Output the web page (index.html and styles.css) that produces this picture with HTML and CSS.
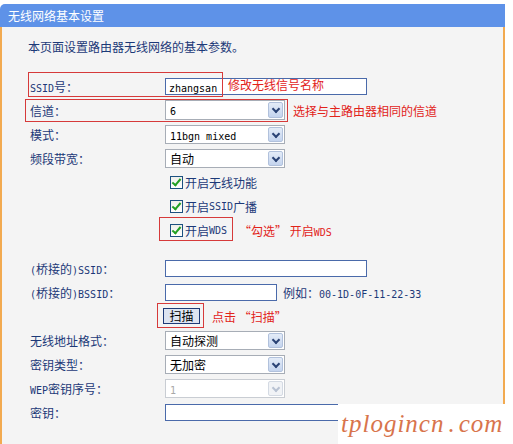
FILE: index.html
```html
<!DOCTYPE HTML>
<html lang="zh-CN">
  <head>
    <title>无线网络基本设置</title>
    <meta charset="utf-8">
    <link rel="stylesheet" href="styles.css">
  </head>
  <body>
  <div class="page">
    <div class="panel">
      <div class="panel-title">无线网络基本设置</div>
      <div class="panel-body">
        <p class="intro">本页面设置路由器无线网络的基本参数。</p>

        <div class="form">
          <div class="row">
            <div class="lbl"><span class="en">SSID</span>号：</div>
            <div class="txt wide"><span class="en">zhangsan</span></div>
          </div>
          <div class="row">
            <div class="lbl">信道：</div>
            <div class="sel tall"><span class="en">6</span><i class="arrow"></i></div>
            <span class="note">选择与主路由器相同的信道</span>
          </div>
          <div class="row">
            <div class="lbl">模式：</div>
            <div class="sel"><span class="en">11bgn mixed</span><i class="arrow"></i></div>
          </div>
          <div class="row">
            <div class="lbl">频段带宽：</div>
            <div class="sel">自动<i class="arrow"></i></div>
          </div>
          <div class="row">
            <div class="lbl"></div>
            <div class="chk"><i class="box"></i>开启无线功能</div>
          </div>
          <div class="row">
            <div class="lbl"></div>
            <div class="chk"><i class="box"></i>开启<span class="en">SSID</span>广播</div>
          </div>
          <div class="row">
            <div class="lbl"></div>
            <div class="chk"><i class="box"></i>开启<span class="en">WDS</span></div>
            <span class="note wds-note">“勾选” 开启<span class="en">WDS</span></span>
          </div>

          <div class="row gap">
            <div class="lbl"><span class="en">(</span>桥接的<span class="en">)SSID</span>：</div>
            <div class="txt wide"></div>
          </div>
          <div class="row">
            <div class="lbl"><span class="en">(</span>桥接的<span class="en">)BSSID</span>：</div>
            <div class="txt short"></div>
            <span class="hint">例如：<span class="en">00-1D-0F-11-22-33</span></span>
          </div>
          <div class="row">
            <div class="lbl"></div>
            <div class="btn">扫描</div>
            <span class="note scan-note">点击 “扫描”</span>
          </div>
          <div class="row">
            <div class="lbl">无线地址格式：</div>
            <div class="sel">自动探测<i class="arrow"></i></div>
          </div>
          <div class="row">
            <div class="lbl">密钥类型：</div>
            <div class="sel">无加密<i class="arrow"></i></div>
          </div>
          <div class="row">
            <div class="lbl"><span class="en">WEP</span>密钥序号：</div>
            <div class="sel disabled"><span class="en">1</span><i class="arrow"></i></div>
          </div>
          <div class="row">
            <div class="lbl">密钥：</div>
            <div class="txt wide"></div>
          </div>
        </div>
      </div>
    </div>

    <!-- red annotations drawn over the form -->
    <div class="mark mark-ssid"></div>
    <span class="note ssid-note">修改无线信号名称</span>
    <div class="mark mark-channel"></div>
    <div class="mark mark-wds"></div>
    <div class="mark mark-scan"></div>

    <div class="watermark">tplogincn<span class="dot">.</span>com</div>
  </div>
  </body>
</html>
```

FILE: styles.css
```css
  html, body {
    margin: 0;
    padding: 0;
    background: #ffffff;
  }
  body {
    font-family: "Noto Sans CJK SC", "Liberation Sans", sans-serif;
    font-size: 12px;
    color: #1c3978;
  }

  .page {
    position: relative;
    width: 513px;
    height: 444px;
    padding-top: 4px;
    box-sizing: border-box;
    overflow: hidden;
  }

  .en {
    font-family: "DejaVu Sans Mono", monospace;
    font-size: 10px;
  }

  .panel {
    width: 505px;
  }
  .panel-title {
    height: 23px;
    line-height: 23px;
    padding-left: 8px;
    background: #5e92e8;
    color: #ffffff;
    border-top-left-radius: 5px;
  }
  .panel-body {
    height: 417px;
    background: #f4f4f4;
    border-left: 2px solid #f2aa50;
    border-right: 2px solid #f2aa50;
    padding-top: 8px;
    box-sizing: border-box;
  }

  .intro {
    margin: 0 0 15px 26px;
    line-height: 24px;
  }

  .form {
    padding-left: 28px;
  }
  .row {
    display: flex;
    align-items: center;
    height: 24px;
  }
  .row.gap {
    margin-top: 14px;
  }
  .lbl {
    width: 135px;
    flex: none;
    white-space: nowrap;
  }

  .txt {
    height: 17px;
    box-sizing: border-box;
    border: 1px solid #4a6aaa;
    background: #ffffff;
    color: #000000;
    padding-left: 3px;
    line-height: 15px;
  }
  .txt.wide { width: 202px; }
  .txt.short { width: 112px; }

  .sel {
    position: relative;
    width: 120px;
    height: 19px;
    box-sizing: border-box;
    border: 1px solid #a7adb6;
    background: #ffffff;
    color: #000000;
    padding-left: 4px;
    line-height: 17px;
  }
  .sel.tall { height: 20px; line-height: 18px; }
  .sel .arrow {
    position: absolute;
    top: 1px;
    right: 1px;
    bottom: 1px;
    width: 15px;
    box-sizing: border-box;
    border: 1px solid #b1c1dc;
    border-radius: 2px;
    background: linear-gradient(#e4ecf8, #c4d4ee);
  }
  .sel .arrow::after {
    content: "";
    position: absolute;
    left: 4px;
    top: 3px;
    width: 4px;
    height: 4px;
    border-right: 2px solid #2b4375;
    border-bottom: 2px solid #2b4375;
    transform: rotate(45deg);
  }
  .sel.disabled {
    color: #a8a8a8;
    border-color: #c9cdd3;
  }
  .sel.disabled .arrow {
    background: #f1f3f6;
    border-color: #d4dae3;
  }
  .sel.disabled .arrow::after {
    border-color: #b8c2d2;
  }

  .chk {
    display: flex;
    align-items: center;
    margin-left: 5px;
    white-space: nowrap;
  }
  .chk .box {
    position: relative;
    width: 13px;
    height: 13px;
    box-sizing: border-box;
    border: 1px solid #1c5180;
    background: linear-gradient(#f0f0ea, #ffffff);
    margin-right: 2px;
  }
  .chk .box::after {
    content: "";
    position: absolute;
    left: 3px;
    top: 0px;
    width: 3px;
    height: 7px;
    border-right: 2px solid #22a022;
    border-bottom: 2px solid #22a022;
    transform: rotate(40deg);
  }

  .btn {
    margin-left: -2px;
    width: 37px;
    height: 16px;
    box-sizing: border-box;
    border: 1px solid #1d3a78;
    background: #dde4f1;
    color: #000000;
    text-align: center;
    line-height: 14px;
  }

  .hint {
    margin-left: 6px;
    white-space: nowrap;
  }

  .note {
    color: #e2231a;
    white-space: nowrap;
    margin-left: 8px;
  }
  .wds-note { margin-left: 12px; }
  .scan-note { margin-left: 12px; }

  .mark {
    position: absolute;
    border: 1px solid #d63a3a;
    box-sizing: border-box;
  }
  .mark-ssid { left: 28px; top: 72px; width: 195px; height: 25px; }
  .mark-channel { left: 25px; top: 99px; width: 263px; height: 23px; }
  .mark-wds { left: 159px; top: 217px; width: 74px; height: 24px; }
  .mark-scan { left: 157px; top: 303px; width: 47px; height: 25px; }

  .ssid-note {
    position: absolute;
    left: 228px;
    top: 77px;
    margin: 0;
    line-height: 16px;
  }

  .watermark {
    position: absolute;
    left: 338px;
    top: 404px;
    width: 175px;
    height: 40px;
    background: #ffffff;
    font-family: "Liberation Serif", serif;
    font-style: italic;
    font-size: 25px;
    letter-spacing: 1px;
    line-height: 40px;
    padding-left: 3px;
    box-sizing: border-box;
    color: #d8744c;
    white-space: nowrap;
  }
  .watermark .dot {
    margin: 0 3px 0 4px;
  }
```
